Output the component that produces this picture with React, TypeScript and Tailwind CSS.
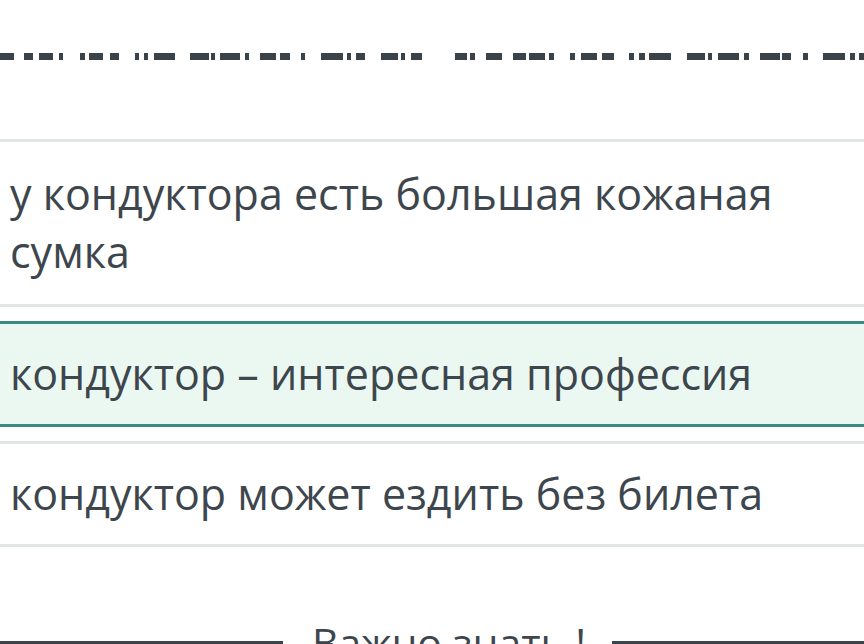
import React from 'react';

// Clipped question strip at the top: dark dash segments [start, end] in px
const strip: [number, number][] = [
  [0, 14], [24, 33], [39, 53], [59, 63], [80, 85], [89, 103], [110, 119], [135, 139],
  [144, 148], [154, 175], [190, 209], [211, 215], [220, 240], [245, 249], [260, 276],
  [280, 290], [301, 305], [321, 343], [347, 351], [356, 365], [381, 398], [401, 405],
  [411, 422], [455, 467], [470, 475], [486, 502], [513, 526], [529, 545], [549, 554],
  [570, 575], [581, 597], [602, 614], [629, 634], [639, 645], [649, 671], [687, 705],
  [708, 712], [718, 739], [744, 749], [760, 780], [782, 791], [803, 808], [823, 845],
  [850, 855], [859, 864],
];

const options = [
  { id: 1, text: 'у кондуктора есть большая кожаная сумка', selected: false },
  { id: 2, text: 'кондуктор – интересная профессия', selected: true },
  { id: 3, text: 'кондуктор может ездить без билета', selected: false },
];

const App: React.FC = () => {
  return (
    <div
      className="w-[864px] h-[644px] overflow-hidden bg-white text-[#3e464d]"
      style={{ fontFamily: '"Open Sans", "Noto Sans", sans-serif' }}
    >
      {/* question text, only its lower edge is visible */}
      <div className="h-[139px] pt-[53px]">
        <div className="flex h-[7px]">
          {strip.map(([a, b], i) => (
            <div
              key={i}
              className="h-full shrink-0 bg-[#3a424a]"
              style={{ marginLeft: i === 0 ? a : a - strip[i - 1][1], width: b - a }}
            />
          ))}
        </div>
      </div>

      <div className="flex flex-col gap-[14px]">
        {options.map((o) => (
          <div
            key={o.id}
            className={
              o.selected
                ? 'border-y-[3px] border-[#3a8b85] bg-[#ebf8f2] px-[10px] py-[21px]'
                : o.id === 1
                  ? 'border-y-[3px] border-[#e2e5e6] bg-white px-[10px] py-[23px]'
                  : 'border-y-[3px] border-[#e2e5e6] bg-white px-[10px] py-[21px]'
            }
          >
            <p className="text-[43px] leading-[58px] pr-[60px]">{o.text}</p>
          </div>
        ))}
      </div>

      <div className="mt-[75px] flex items-center h-[41px]">
        <div className="w-[283px] h-[3px] bg-[#3d454c]" />
        <span className="pl-[29px] pr-[26px] text-[41px] leading-none whitespace-nowrap">Важно знать !</span>
        <div className="flex-1 h-[3px] bg-[#3d454c]" />
      </div>
    </div>
  );
};

export default App;
